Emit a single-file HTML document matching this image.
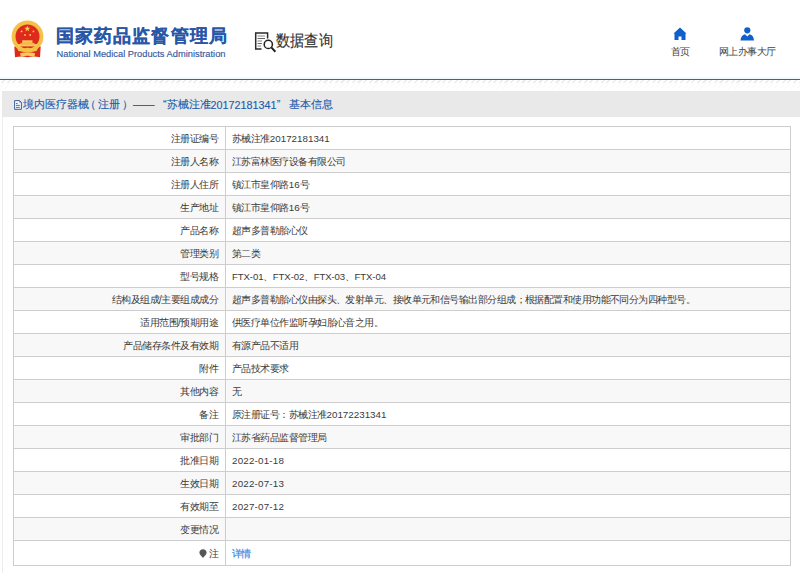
<!DOCTYPE html>
<html><head><meta charset="utf-8">
<style>
html,body{margin:0;padding:0;}
body{width:800px;height:573px;overflow:hidden;background:#fff;font-family:"Liberation Sans",sans-serif;position:relative;color:#333;}
.abs{position:absolute;}
#hdr{left:0;top:0;width:800px;height:79px;background:#fff;}
#title{left:56px;top:23.5px;font-size:17.5px;letter-spacing:1.1px;font-weight:bold;color:#2857a8;-webkit-text-stroke:0.15px #2857a8;white-space:nowrap;line-height:24px;}
#eng{left:56.5px;top:47.3px;font-size:9.3px;color:#35599c;-webkit-text-stroke:0.15px #35599c;white-space:nowrap;line-height:14px;}
#sq{left:275.5px;top:31px;font-size:16px;color:#333;-webkit-text-stroke:0.15px #333;white-space:nowrap;line-height:20px;transform:scaleX(0.89);transform-origin:0 0;}
.nav{font-size:10px;letter-spacing:-0.6px;color:#444;white-space:nowrap;line-height:12px;}
#line{left:0;top:79px;width:800px;height:1px;background:#3a6696;}
#lineglow{left:0;top:77px;width:800px;height:2px;background:#f0fbfd;}
#hatch{left:0;top:80px;width:800px;height:3px;background:repeating-linear-gradient(135deg,#fff 0,#fff 2.5px,#ececec 2.5px,#ececec 4px);}
#hatch2{left:0;top:83px;width:800px;height:6px;background:repeating-linear-gradient(135deg,#fff 0,#fff 2.5px,#fbfbfb 2.5px,#fbfbfb 4px);}
#panel{left:2px;top:91px;width:798px;height:482px;background:#fff;border-left:1px solid #ececec;}
#ph{left:2px;top:91px;width:798px;height:26px;background:#e9e9e9;}
#phtext{left:23px;top:97px;font-size:10.7px;color:#1d5aad;-webkit-text-stroke:0.12px #1d5aad;white-space:nowrap;line-height:14px;}
table{position:absolute;left:13px;top:126px;width:778px;border-collapse:collapse;table-layout:fixed;}
td{border:1px solid #cdcdcd;height:21px;padding:1px 0 0 0;font-size:10px;letter-spacing:-0.55px;color:#3a3a3a;white-space:nowrap;line-height:21px;}
td.l{width:204px;text-align:right;padding-right:7px;}
td.v{padding-left:6px;}
tr:nth-child(even) td{background:#f8f8f8;}
.n{font-size:9.8px;letter-spacing:0px;}
.d{font-size:9.8px;letter-spacing:0.2px;}
.m{font-size:9.6px;letter-spacing:-0.1px;}
.n2{font-size:10.8px;vertical-align:-1px;}
a{color:#3a8ae0;text-decoration:none;-webkit-text-stroke:0.2px #3a8ae0;}
</style></head><body>
<div id="hdr" class="abs"></div>
<svg class="abs" style="left:8px;top:18px" width="40" height="42" viewBox="8 18 40 42">
  <path d="M14.3 46.5 L40.7 46.5 L40 57.2 Q33 55.6 27.5 57.2 Q22 55.6 15 57.2 Z" fill="#dd2a1e"/>
  <circle cx="27.5" cy="36.4" r="15.9" fill="#f3c246"/>
  <circle cx="27.5" cy="36.4" r="12" fill="#e0291d"/>
  <polygon points="27.3,25.6 28.1,27.8 30.4,27.8 28.5,29.2 29.3,31.4 27.3,30 25.4,31.4 26.1,29.2 24.3,27.8 26.6,27.8" fill="#f6cc55"/>
  <circle cx="21.6" cy="31.4" r="0.9" fill="#f6cc55"/>
  <circle cx="33.4" cy="31.4" r="0.9" fill="#f6cc55"/>
  <circle cx="25" cy="35" r="0.9" fill="#f6cc55"/>
  <circle cx="30.2" cy="35" r="0.9" fill="#f6cc55"/>
  <rect x="22.2" y="40.3" width="10.3" height="2.6" fill="#f6cc55"/>
  <rect x="20.5" y="42.9" width="14" height="1.2" fill="#efb94a"/>
  <rect x="17.9" y="44.1" width="19.2" height="2.3" fill="#f6cc55"/>
  <path d="M17 48.3 Q22 50.5 27.5 47.6 Q33 50.5 38 48.3 L36.5 51 Q30 52.5 27.5 51.2 Q25 52.5 18.5 51 Z" fill="#f3c246"/>
  <path d="M20 53.2 Q27.5 51.2 35.2 53.2 L34.3 56.7 Q27.5 55 20.9 56.7 Z" fill="#f6cc55"/>
</svg>
<div id="title" class="abs">国家药品监督管理局</div>
<div id="eng" class="abs">National Medical Products Administration</div>
<svg class="abs" style="left:254px;top:31px" width="24" height="23" viewBox="254 31 24 23">
  <path d="M261.5 49 H255.7 V33 H267.6 V38.5" fill="none" stroke="#2a2a2a" stroke-width="1.5"/>
  <line x1="257.5" y1="36" x2="265" y2="36" stroke="#777" stroke-width="0.9"/>
  <line x1="257.5" y1="38.5" x2="265" y2="38.5" stroke="#555" stroke-width="0.9"/>
  <line x1="257.5" y1="41" x2="262" y2="41" stroke="#777" stroke-width="0.9"/>
  <line x1="257.5" y1="43.5" x2="262" y2="43.5" stroke="#555" stroke-width="0.9"/>
  <line x1="257.5" y1="46" x2="261" y2="46" stroke="#777" stroke-width="0.9"/>
  <circle cx="268.3" cy="44.4" r="4.1" fill="#fff" stroke="#222" stroke-width="1.5"/>
  <line x1="271.3" y1="47.4" x2="275.4" y2="51.8" stroke="#222" stroke-width="2"/>
</svg>
<div id="sq" class="abs">数据查询</div>
<svg class="abs" style="left:673px;top:27px" width="14" height="14" viewBox="0 0 14 14">
  <path d="M7 0.5 L13.5 6.5 L12.5 6.5 L12.5 13 L8.5 13 L8.5 9.5 L5.5 9.5 L5.5 13 L1.5 13 L1.5 6.5 L0.5 6.5 Z" fill="#0f5fcc"/>
</svg>
<div class="abs nav" style="left:671px;top:46px">首页</div>
<svg class="abs" style="left:740px;top:27px" width="15" height="14" viewBox="0 0 15 14">
  <circle cx="7.3" cy="3.3" r="3.1" fill="#0f5fcc"/>
  <path d="M0.5 13.5 Q1 8 5 7.2 L7.3 9.6 L9.6 7.2 Q13.6 8 14 13.5 Z" fill="#0f5fcc"/>
</svg>
<div class="abs nav" style="left:719px;top:46px">网上办事大厅</div>
<div id="lineglow" class="abs"></div>
<div id="line" class="abs"></div>
<div id="hatch" class="abs"></div><div id="hatch2" class="abs"></div>
<div id="panel" class="abs"></div>
<div id="ph" class="abs"></div>
<svg class="abs" style="left:12px;top:98px" width="14" height="14" viewBox="12 98 14 14">
  <path d="M14.6 100.6 H19.6 L21.4 102.4 V109.3 H14.6 Z" fill="#f4f8fc" stroke="#3e5f98" stroke-width="1"/>
  <path d="M19.4 100.6 V102.6 H21.4 Z" fill="#3e5f98"/>
  <rect x="16" y="103" width="1.6" height="0.9" fill="#4a64a4"/>
  <rect x="16" y="104.9" width="3.8" height="0.9" fill="#4a64a4"/>
  <rect x="16" y="106.9" width="3.8" height="0.9" fill="#4a64a4"/>
</svg>
<div id="phtext" class="abs"><span class="abs" style="left:0">境内医疗器械</span><span class="abs" style="left:62px">（</span><span class="abs" style="left:74.7px">注册</span><span class="abs" style="left:98.5px">）</span><span class="abs" style="left:110px">——</span><span class="abs" style="left:140px">“苏械注准<span class="n2">20172181341</span>”</span><span class="abs" style="left:266px">基本信息</span></div>
<table>
<tr><td class="l">注册证编号</td><td class="v">苏械注准<span class="n">20172181341</span></td></tr>
<tr><td class="l">注册人名称</td><td class="v">江苏富林医疗设备有限公司</td></tr>
<tr><td class="l">注册人住所</td><td class="v">镇江市皇仰路<span class="n">16</span>号</td></tr>
<tr><td class="l">生产地址</td><td class="v">镇江市皇仰路<span class="n">16</span>号</td></tr>
<tr><td class="l">产品名称</td><td class="v">超声多普勒胎心仪</td></tr>
<tr><td class="l">管理类别</td><td class="v">第二类</td></tr>
<tr><td class="l">型号规格</td><td class="v"><span class="m">FTX-01</span>、<span class="m">FTX-02</span>、<span class="m">FTX-03</span>、<span class="m">FTX-04</span></td></tr>
<tr><td class="l">结构及组成/主要组成成分</td><td class="v">超声多普勒胎心仪由探头、发射单元、接收单元和信号输出部分组成；根据配置和使用功能不同分为四种型号。</td></tr>
<tr><td class="l">适用范围/预期用途</td><td class="v">供医疗单位作监听孕妇胎心音之用。</td></tr>
<tr><td class="l">产品储存条件及有效期</td><td class="v">有源产品不适用</td></tr>
<tr><td class="l">附件</td><td class="v">产品技术要求</td></tr>
<tr><td class="l">其他内容</td><td class="v">无</td></tr>
<tr><td class="l">备注</td><td class="v">原注册证号：苏械注准<span class="n">20172231341</span></td></tr>
<tr><td class="l">审批部门</td><td class="v">江苏省药品监督管理局</td></tr>
<tr><td class="l">批准日期</td><td class="v"><span class="d">2022-01-18</span></td></tr>
<tr><td class="l">生效日期</td><td class="v"><span class="d">2022-07-13</span></td></tr>
<tr><td class="l">有效期至</td><td class="v"><span class="d">2027-07-12</span></td></tr>
<tr><td class="l">变更情况</td><td class="v"></td></tr>
<tr><td class="l" style="height:23px"><svg width="8" height="9" viewBox="0 0 8 9" style="vertical-align:-1px;margin-right:1.5px"><path d="M4 0.3 C6.1 0.3 7.6 1.8 7.6 3.8 C7.6 5.6 5.5 6.8 4.6 8.6 H3.4 C2.5 6.8 0.4 5.6 0.4 3.8 C0.4 1.8 1.9 0.3 4 0.3 Z" fill="#555"/></svg>注</td><td class="v" style="height:23px"><a>详情</a></td></tr>
</table>
</body></html>
